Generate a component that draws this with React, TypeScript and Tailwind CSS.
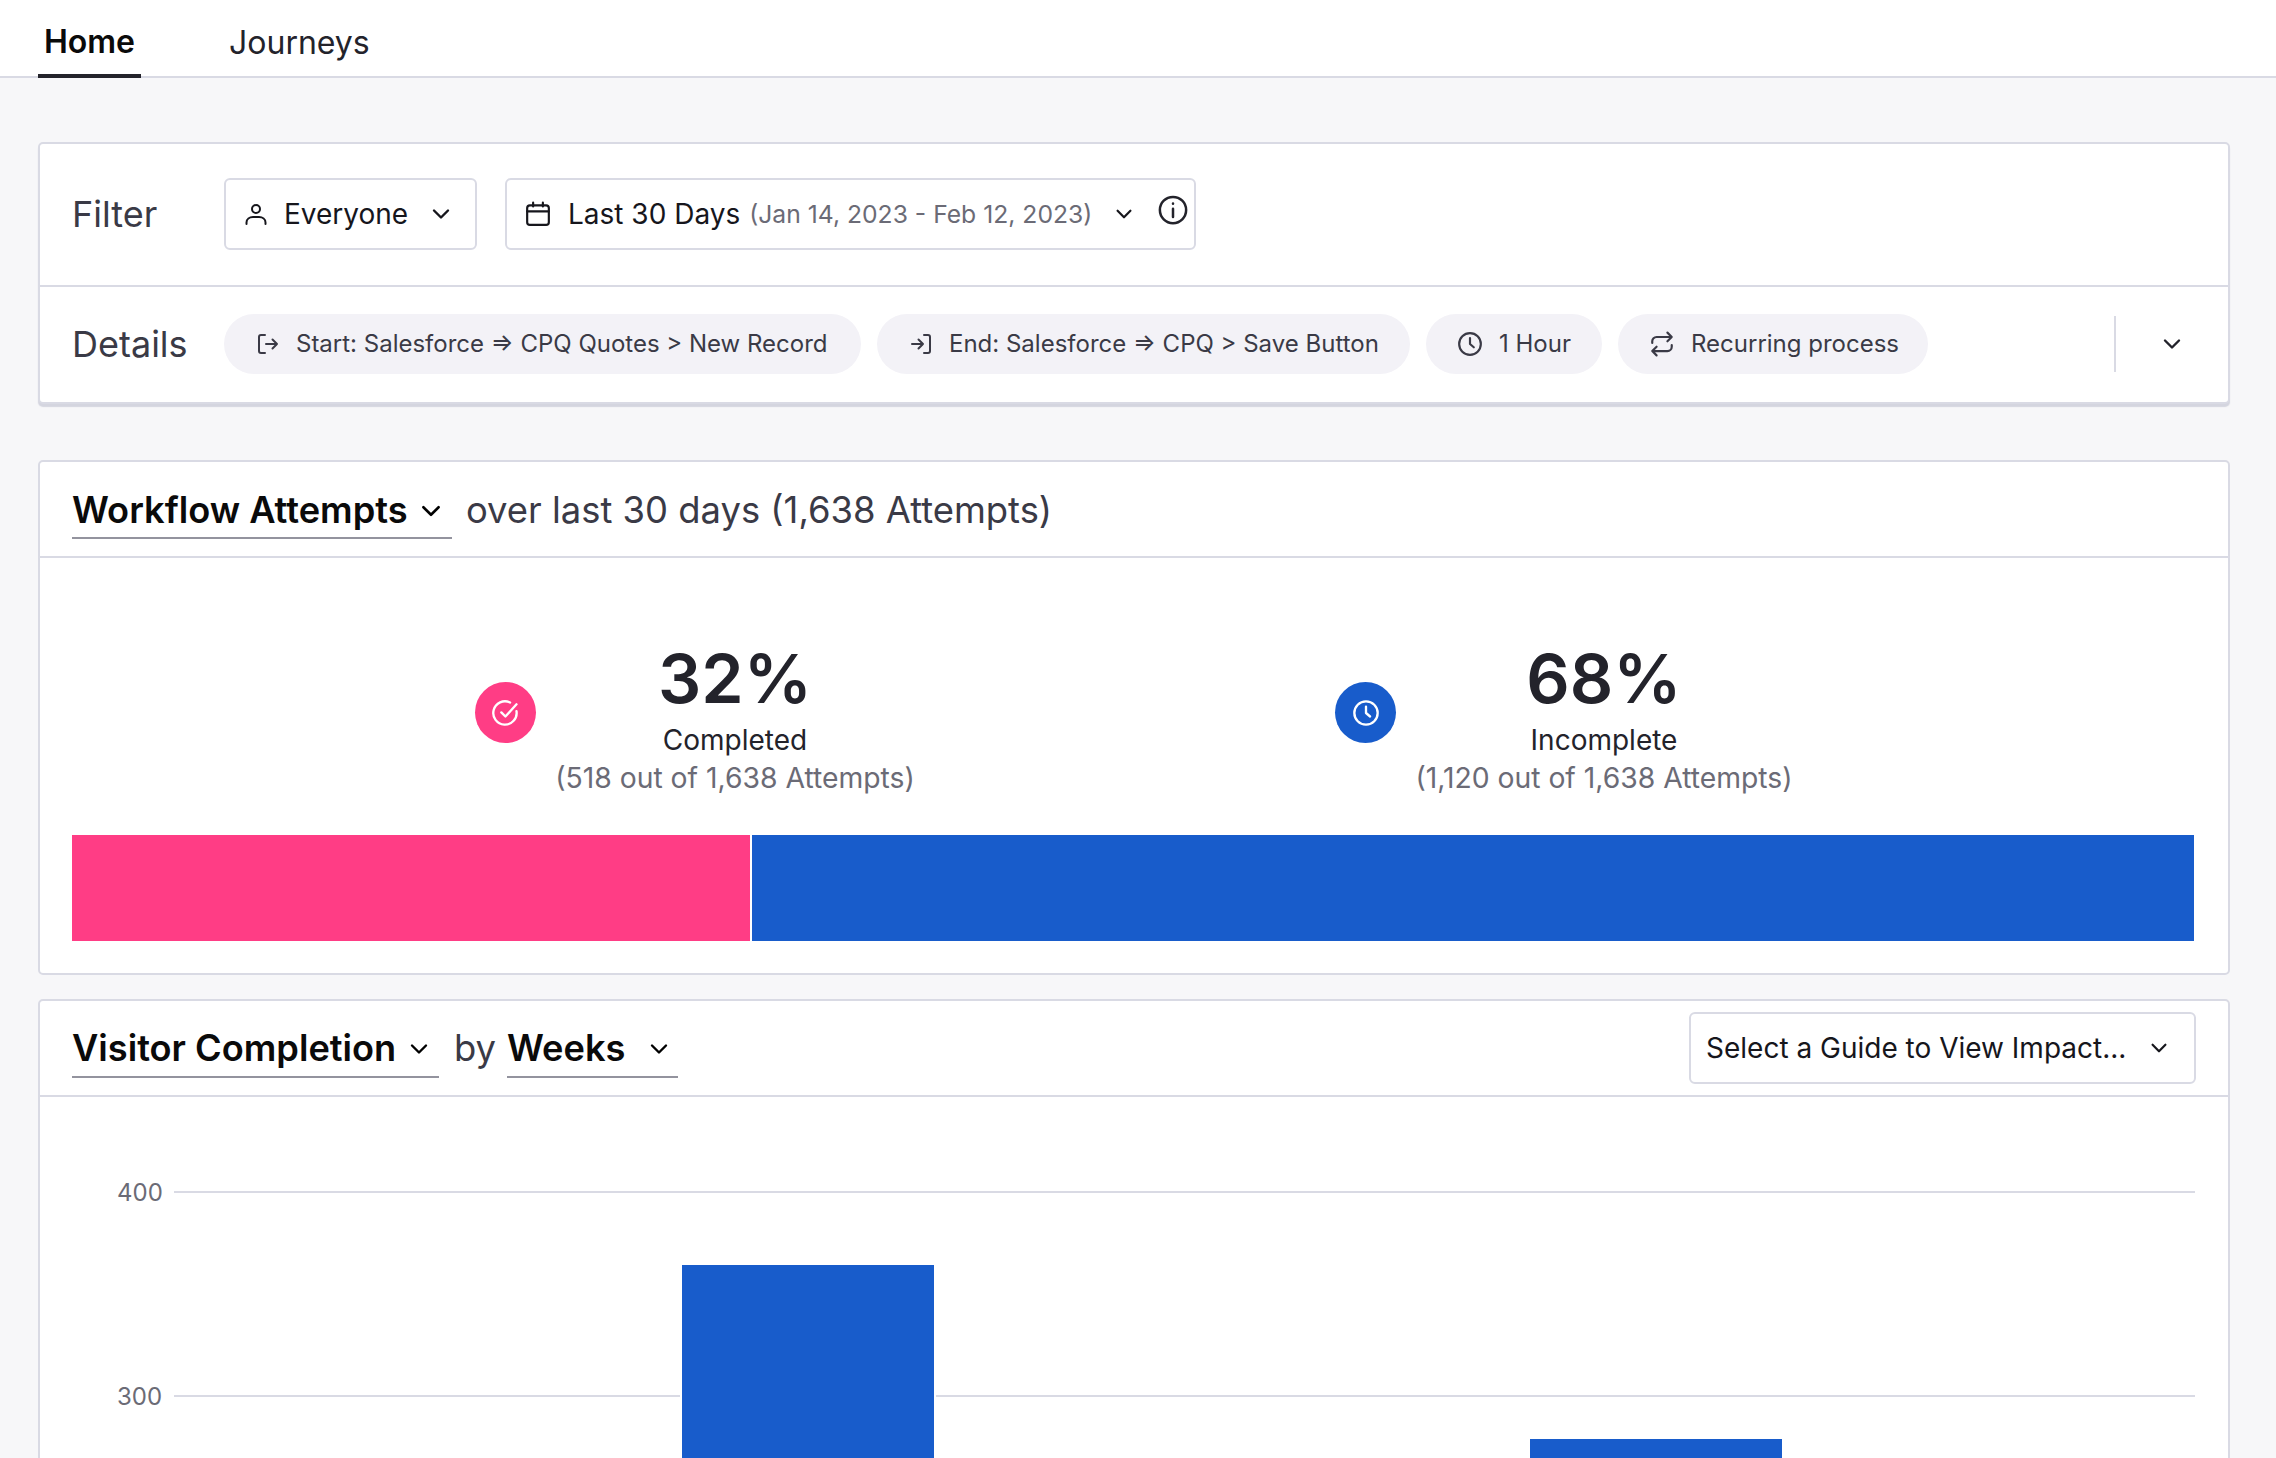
import React from "react";

const stroke = { fill: "none", stroke: "currentColor", strokeLinecap: "round" as const, strokeLinejoin: "round" as const };

function Chevron({ className = "" }: { className?: string }) {
  return (
    <svg viewBox="0 0 24 24" className={`shrink-0 ${className}`} {...stroke} strokeWidth={2.4}>
      <path d="M5 8.500l7 7 7-7" />
    </svg>
  );
}
function UserIcon({ className = "" }: { className?: string }) {
  return (
    <svg viewBox="0 0 24 24" className={`shrink-0 ${className}`} {...stroke} strokeWidth={2}>
      <circle cx="12" cy="7" r="4" />
      <path d="M2.500 22v-1.500C2.500 17 5.500 15 9 15h6c3.500 0 6.500 2 6.500 5.500V22" />
    </svg>
  );
}
function CalendarIcon({ className = "" }: { className?: string }) {
  return (
    <svg viewBox="0 0 24 24" className={`shrink-0 ${className}`} {...stroke} strokeWidth={2}>
      <rect x="2" y="4" width="20" height="18" rx="2.500" />
      <path d="M2 9.500h20M7.500 1.500V5M16.500 1.500V5" />
    </svg>
  );
}
function InfoIcon({ className = "" }: { className?: string }) {
  return (
    <svg viewBox="0 0 24 24" className={`shrink-0 ${className}`} {...stroke} strokeWidth={2}>
      <circle cx="12" cy="12" r="10.500" />
      <path d="M12 11v6.500M12 6.800v.2" />
    </svg>
  );
}
function StartIcon({ className = "" }: { className?: string }) {
  return (
    <svg viewBox="0 0 24 24" className={`shrink-0 ${className}`} {...stroke} strokeWidth={2}>
      <path d="M9 3H5a2 2 0 0 0-2 2v14a2 2 0 0 0 2 2h4M10 12h11M16.500 7.500L21 12l-4.500 4.500" />
    </svg>
  );
}
function EndIcon({ className = "" }: { className?: string }) {
  return (
    <svg viewBox="0 0 24 24" className={`shrink-0 ${className}`} {...stroke} strokeWidth={2}>
      <path d="M15 3h4a2 2 0 0 1 2 2v14a2 2 0 0 1-2 2h-4M3 12h11M9.500 7.500L14 12l-4.500 4.500" />
    </svg>
  );
}
function ClockIcon({ className = "" }: { className?: string }) {
  return (
    <svg viewBox="0 0 24 24" className={`shrink-0 ${className}`} {...stroke} strokeWidth={2}>
      <circle cx="12" cy="12" r="10" />
      <path d="M12 6.500V12l3.500 3" />
    </svg>
  );
}
function RepeatIcon({ className = "" }: { className?: string }) {
  return (
    <svg viewBox="0 0 24 24" className={`shrink-0 ${className}`} {...stroke} strokeWidth={2}>
      <path d="M17 1.500l4 4-4 4M3 11V9.500a4 4 0 0 1 4-4h14M7 22.500l-4-4 4-4M21 13v1.500a4 4 0 0 1-4 4H3" />
    </svg>
  );
}
function CheckCircleIcon({ className = "" }: { className?: string }) {
  return (
    <svg viewBox="0 0 24 24" className={`shrink-0 ${className}`} {...stroke} strokeWidth={2}>
      <path d="M21 10.500A10 10 0 1 1 15.500 3" />
      <path d="M8 11.500l3.500 3.500L21 4.500" />
    </svg>
  );
}

function Pill({ icon, children, className = "" }: { icon: React.ReactNode; children: React.ReactNode; className?: string }) {
  return (
    <div className={`flex h-[60px] items-center rounded-full bg-[#f3f2f7] text-[24px] leading-none text-[#3a3a46] ${className}`}>
      {icon}
      <span className="whitespace-nowrap">{children}</span>
    </div>
  );
}

function Stat({ pct, label, sub, circle, icon, w, gap }: { pct: string; label: string; sub: string; circle: string; icon: React.ReactNode; w: string; gap: string }) {
  return (
    <div className={`flex items-center ${gap}`}>
      <div className={`mt-[-10px] flex h-[61px] w-[61px] shrink-0 items-center justify-center rounded-full text-white ${circle}`}>{icon}</div>
      <div className={`flex flex-col items-center ${w}`}>
        <div className="text-[68px] font-semibold leading-[80px] text-[#23232b]">{pct}</div>
        <div className="mt-[3px] text-[28px] leading-[38px] text-[#23232b]">{label}</div>
        <div className="text-[28.300px] leading-[39px] text-[#6b6b76]">{sub}</div>
      </div>
    </div>
  );
}

export default function App() {
  return (
    <div className="h-[1458px] overflow-hidden bg-[#f7f7f9] font-['Inter',sans-serif]">
      <div className="flex h-[78px] items-end border-b-2 border-[#d9dae4] bg-white pl-[38px]">
        <div className="mb-[-2px] flex h-[80px] w-[103px] items-center justify-center border-b-4 border-[#23232b] pt-[11px] text-[32px] font-semibold text-[#0a0a0a]">Home</div>
        <div className="mb-[-2px] flex h-[80px] items-center pl-[88px] pt-[9px] text-[32px] text-[#23232b]">Journeys</div>
      </div>

      <div className="pl-[38px] pr-[46px] pt-[64px]">
        <div className="rounded-[5px] border-2 border-[#d9dae4] bg-white shadow-[0_3px_1px_#d4d5df]">
          <div className="flex h-[143px] items-center border-b-2 border-[#d9dae4] pb-[1px] pl-[32px]">
            <div className="w-[152px] text-[36px] text-[#3a3a46]">Filter</div>
            <div className="flex h-[72px] w-[253px] items-center rounded-[6px] border-2 border-[#d9dae4] pl-[18px] text-[28px] text-[#16161c]">
              <UserIcon className="h-[24px] w-[24px]" />
              <span className="ml-[16px]">Everyone</span>
              <Chevron className="ml-[21px] h-[24px] w-[24px]" />
            </div>
            <div className="ml-[28px] flex h-[72px] w-[691px] items-center rounded-[6px] border-2 border-[#d9dae4] pl-[18px] text-[28px] text-[#16161c]">
              <CalendarIcon className="h-[26px] w-[26px]" />
              <span className="ml-[17px] whitespace-nowrap">Last 30 Days</span>
              <span className="ml-[9px] mt-[2px] whitespace-nowrap text-[24.700px] text-[#6b6b76]">(Jan 14, 2023 - Feb 12, 2023)</span>
              <Chevron className="ml-[21px] h-[22px] w-[22px]" />
              <InfoIcon className="mb-[8px] ml-[23px] h-[30px] w-[30px] text-[#23232b]" />
            </div>
          </div>
          <div className="flex h-[115px] items-center pb-[2px] pl-[32px]">
            <div className="w-[152px] text-[36px] text-[#3a3a46]">Details</div>
            <div className="flex gap-[16px]">
              <Pill className="w-[637px] pl-[32px]" icon={<StartIcon className="mr-[16px] h-[24px] w-[24px]" />}>Start: Salesforce ⇒ CPQ Quotes &gt; New Record</Pill>
              <Pill className="w-[533px] pl-[32px]" icon={<EndIcon className="mr-[16px] h-[24px] w-[24px]" />}>End: Salesforce ⇒ CPQ &gt; Save Button</Pill>
              <Pill className="w-[176px] pl-[31px]" icon={<ClockIcon className="mr-[16px] h-[26px] w-[26px]" />}>1 Hour</Pill>
              <Pill className="w-[310px] pl-[31px]" icon={<RepeatIcon className="mr-[16px] h-[26px] w-[26px]" />}>Recurring process</Pill>
            </div>
            <div className="ml-auto flex items-center">
              <div className="h-[56px] w-[2px] bg-[#d9dae4]" />
              <Chevron className="ml-[44px] mr-[44px] h-[24px] w-[24px] text-[#23232b]" />
            </div>
          </div>
        </div>

        <div className="mt-[56px] h-[515px] rounded-[5px] border-2 border-[#d9dae4] bg-white">
          <div className="flex h-[96px] items-center border-b-2 border-[#d9dae4] pl-[32px]">
            <div className="flex h-[59px] w-[380px] items-center border-b-2 border-[#93939e] pt-[5px]">
              <span className="whitespace-nowrap text-[36.200px] font-semibold text-[#0a0a0a]">Workflow Attempts</span>
              <Chevron className="ml-[10px] h-[26px] w-[26px]" />
            </div>
            <span className="ml-[14px] mt-[2px] whitespace-nowrap text-[36.400px] text-[#3a3a46]">over last 30 days (1,638 Attempts)</span>
          </div>
          <div className="pl-[32px] pr-[34px]">
            <div className="flex h-[277px] items-center pt-[42px]">
              <Stat pct="32%" label="Completed" sub="(518 out of 1,638 Attempts)" circle="bg-[#ff3d85]" w="w-[360px]" gap="ml-[403px] gap-[19px]" icon={<CheckCircleIcon className="h-[28px] w-[28px]" />} />
              <Stat pct="68%" label="Incomplete" sub="(1,120 out of 1,638 Attempts)" circle="bg-[#185ccb]" w="w-[380px]" gap="ml-[420px] gap-[18px]" icon={<ClockIcon className="h-[28px] w-[28px]" />} />
            </div>
            <div className="flex h-[106px]">
              <div className="w-[678px] bg-[#ff3d85]" />
              <div className="w-[2px] bg-white" />
              <div className="flex-1 bg-[#185ccb]" />
            </div>
          </div>
        </div>

        <div className="relative mt-[24px] h-[500px] rounded-[5px] border-2 border-[#d9dae4] bg-white">
          <div className="flex h-[96px] items-center border-b-2 border-[#d9dae4] pl-[32px] pr-[32px]">
            <div className="flex h-[59px] w-[367px] items-center border-b-2 border-[#93939e] pt-[3px]">
              <span className="whitespace-nowrap text-[36.200px] font-semibold text-[#0a0a0a]">Visitor Completion</span>
              <Chevron className="ml-[11px] h-[24px] w-[24px]" />
            </div>
            <span className="ml-[15px] text-[36.400px] text-[#3a3a46]">by</span>
            <div className="ml-[11px] flex h-[59px] w-[171px] items-center border-b-2 border-[#93939e] pt-[3px]">
              <span className="text-[36.200px] font-semibold text-[#0a0a0a]">Weeks</span>
              <Chevron className="ml-[22px] h-[24px] w-[24px]" />
            </div>
            <div className="ml-auto flex h-[72px] w-[507px] items-center rounded-[6px] border-2 border-[#d9dae4] pl-[15px] text-[28px] text-[#16161c]">
              <span className="whitespace-nowrap">Select a Guide to View Impact...</span>
              <Chevron className="ml-[22px] h-[22px] w-[22px]" />
            </div>
          </div>
          <div className="relative pl-[77px] pr-[33px] pt-[94px]">
            <div className="flex h-[204px] items-start">
              <span className="mt-[-14px] w-[57px] text-[24px] leading-[32px] text-[#6b6b76]">400</span>
              <div className="h-[2px] flex-1 bg-[#d9dae4]" />
            </div>
            <div className="flex h-[204px] items-start">
              <span className="mt-[-14px] w-[57px] text-[24px] leading-[32px] text-[#6b6b76]">300</span>
              <div className="h-[2px] flex-1 bg-[#d9dae4]" />
            </div>
            <div className="absolute left-[642px] top-[168px] h-[300px] w-[252px] bg-[#185ccb] outline-2 outline-white" />
            <div className="absolute left-[1490px] top-[342px] h-[200px] w-[252px] bg-[#185ccb] outline-2 outline-white" />
          </div>
        </div>
      </div>
    </div>
  );
}
